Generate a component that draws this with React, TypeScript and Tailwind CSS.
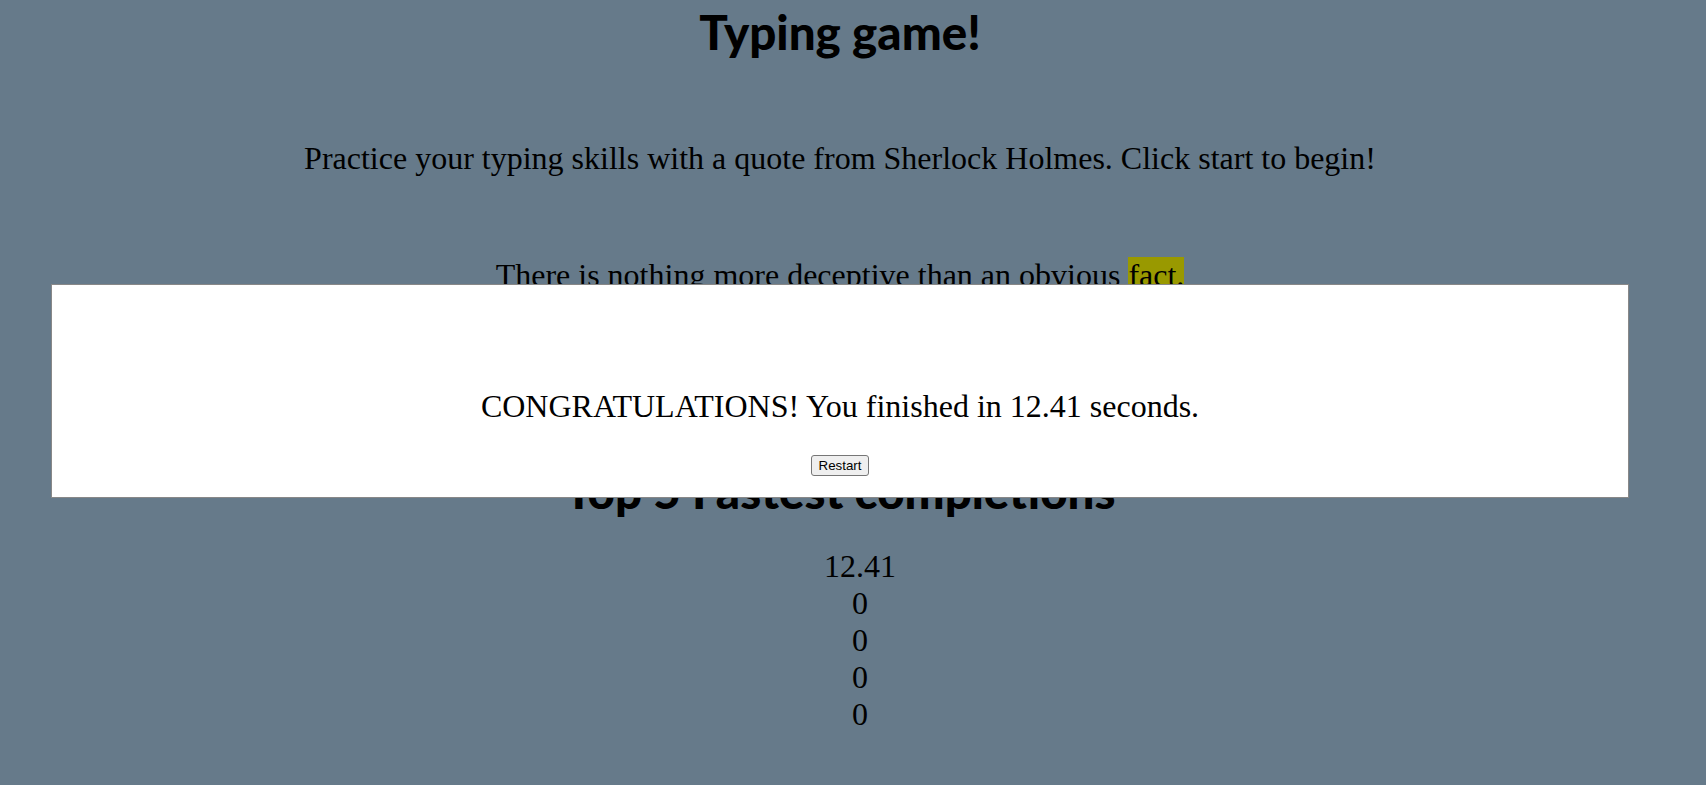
const scores = ['12.41', '0', '0', '0', '0']

const serif = 'font-["Liberation_Serif","Times_New_Roman",serif]'
const heading = 'font-["Lato","DejaVu_Sans_Condensed",sans-serif] text-[47.5px] leading-[53px] font-black'

export default function App() {
  return (
    <div className="min-h-screen w-full bg-[#667a8a] text-black">
      <div className={`w-[1680px] text-center ${serif}`}>
        {/* Header */}
        <h1 className={`pt-[5px] ${heading}`}>Typing game!</h1>

        <p className="mt-[82px] text-[32px] leading-[37px]">
          Practice your typing skills with a quote from Sherlock Holmes. Click start to begin!
        </p>

        {/* Quote being typed */}
        <p className="mt-[80px] text-[32px] leading-[37px]">
          There is nothing more deceptive than an obvious <span className="bg-[#999900]">fact.</span>
        </p>

        {/* Leaderboard */}
        <h1 className={`mt-[170px] ${heading}`}>Top 5 Fastest completions</h1>
        <ul className="mt-[31px] pl-[40px] text-[32px] leading-[37px]">
          {scores.map((s, i) => (
            <li key={i}>{s}</li>
          ))}
        </ul>
      </div>

      {/* Finished modal */}
      <div className={`fixed top-[284px] left-[51px] w-[1578px] border border-[#888888] bg-white pt-[103px] pb-[21px] text-center ${serif}`}>
        <p className="text-[32px] leading-[37px]">CONGRATULATIONS! You finished in 12.41 seconds.</p>
        <div className="mt-[30px] flex justify-center">
          <button className='rounded-[3px] border border-[#767676] bg-[#efefef] px-[7px] py-[2px] font-["Liberation_Sans",Arial,sans-serif] text-[13.33px] leading-[15px] text-black'>
            Restart
          </button>
        </div>
      </div>
    </div>
  )
}
